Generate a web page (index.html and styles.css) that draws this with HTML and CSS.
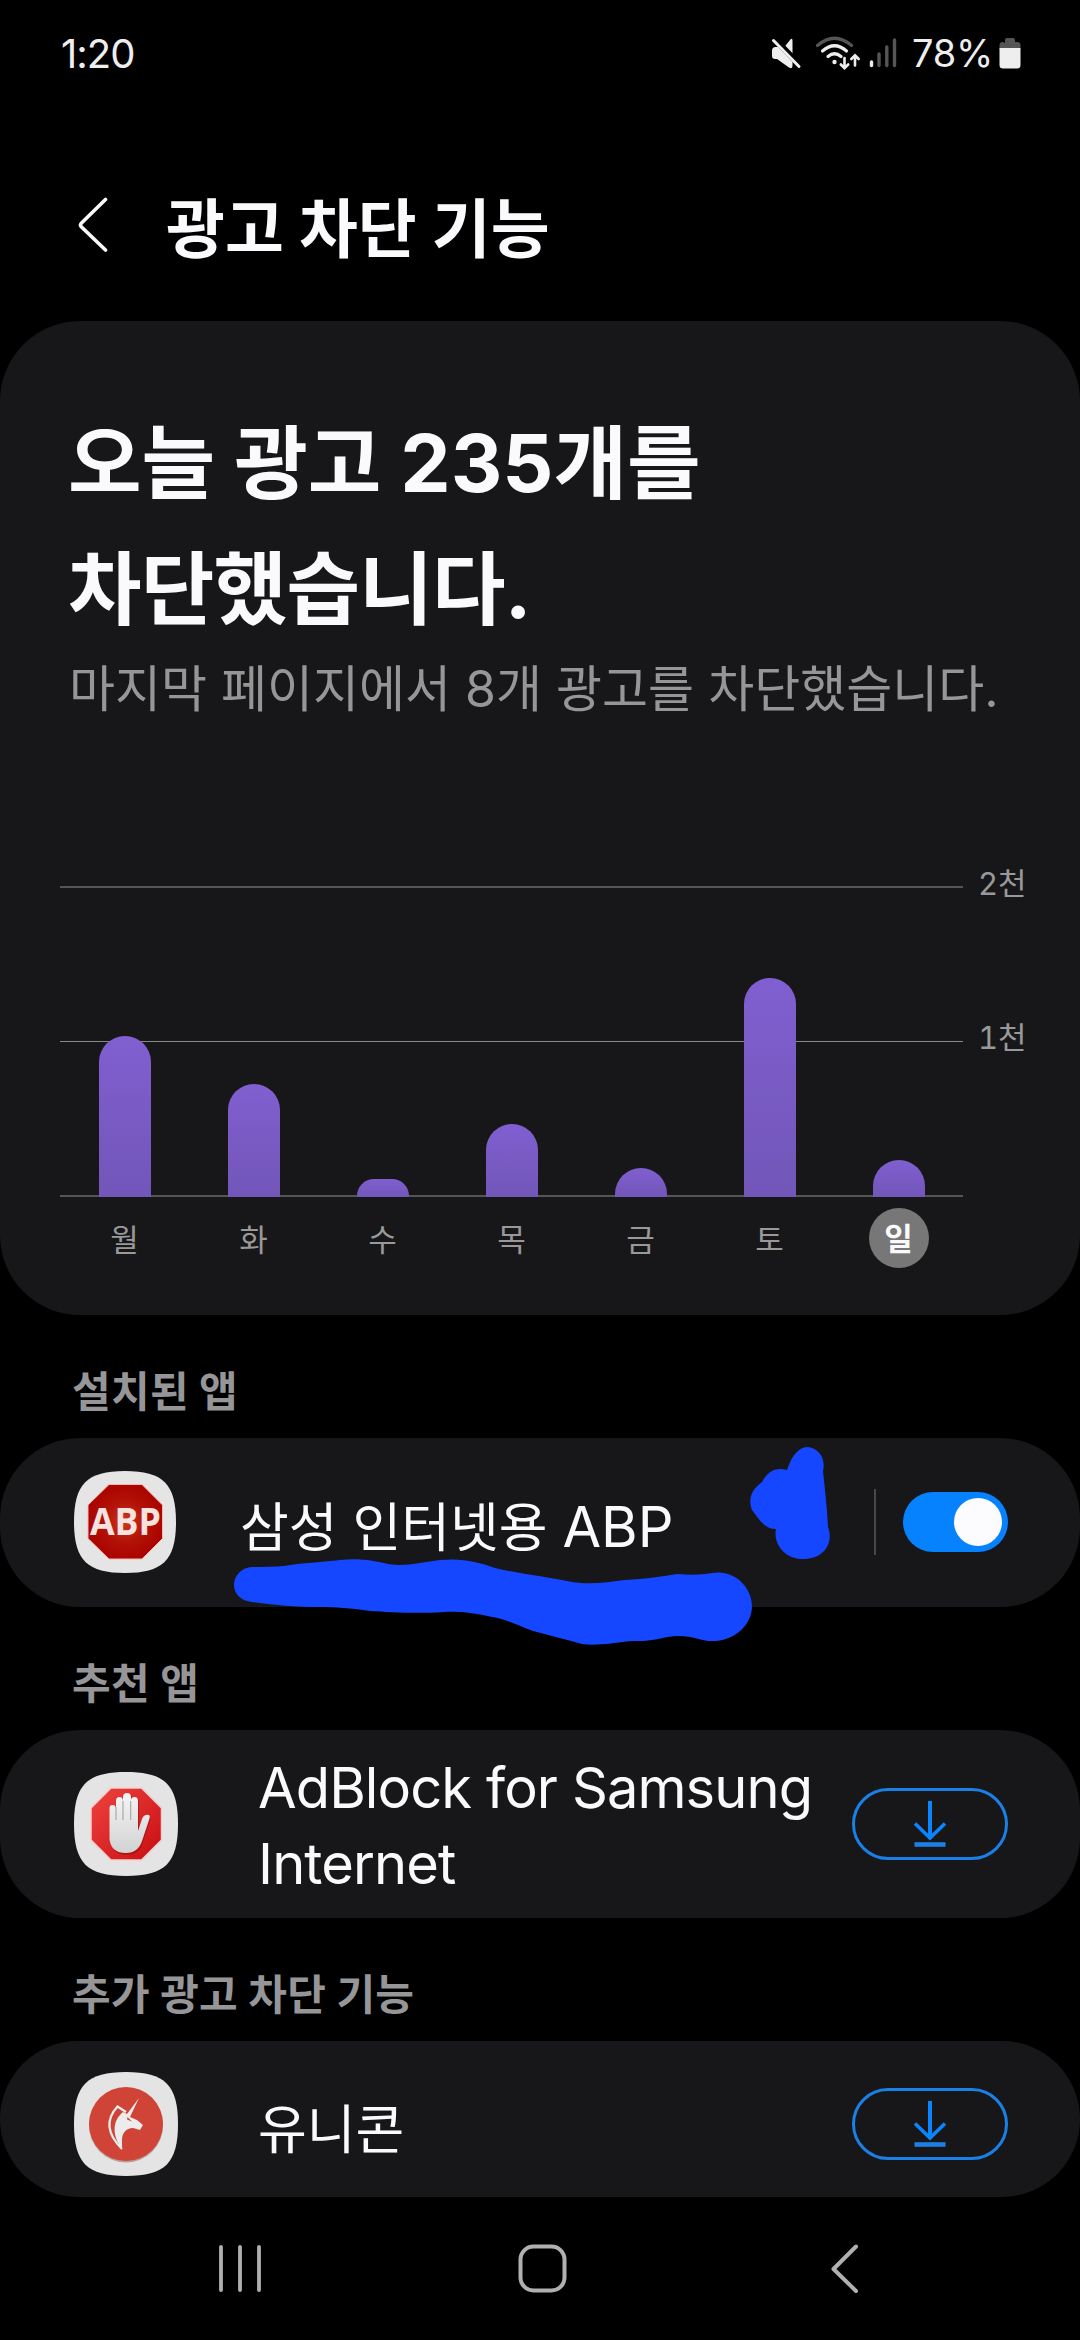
FILE: index.html
```html
<!DOCTYPE html>
<html lang="ko">
<head>
<meta charset="utf-8">
<title>광고 차단 기능</title>
<link rel="stylesheet" href="styles.css">
</head>
<body>
<div class="screen">
  <div class="status">
    <span class="clock">1:20</span>
    <div class="status-right">
      <svg class="ic-mute" width="32" height="32" viewBox="0 0 32 32"><path fill="#eee" d="M4 10 C1.500 10.500 1 12 1 14 V18.500 C1 21.500 2.500 22 6 22 L18 30.500 Q21.500 32.500 21.500 28.500 V25 L7 10 Z M21.500 4 V19 L13 10.500 L19 3 Q21.500 0 21.500 4 Z"/><path d="M5 2 L30 28" stroke="#000" stroke-width="4"/><path d="M2.500 3.500 L28 29.500" stroke="#eee" stroke-width="3" stroke-linecap="round"/></svg>
      <svg class="ic-wifi" width="46" height="36" viewBox="0 0 46 36" fill="none" stroke-linecap="round" stroke-width="3.200"><path d="M2.500 10.500 Q19.500 -4 36.500 10.500" stroke="#555"/><path d="M7.500 16 Q19.500 5.500 31.500 16" stroke="#eee"/><path d="M13 21.500 Q19.500 16 26 21.500" stroke="#eee"/><circle cx="19.500" cy="27" r="2.200" fill="#eee"/><g stroke="#eee" stroke-width="2.600"><path d="M29.500 23 V33 M25.800 29.500 L29.500 33.200 L33.200 29.500"/><path d="M40 30.500 V20.500 M36.300 24 L40 20.300 L43.700 24"/></g></svg>
      <svg class="ic-sig" width="28" height="30" viewBox="0 0 28 30" stroke-width="3.400" stroke-linecap="round"><path d="M2.500 24 V27.500" stroke="#eee"/><path d="M10 16 V27.500 M17.800 9 V27.500 M25.500 2 V27.500" stroke="#555"/></svg>
      <span class="pct">78%</span>
      <svg class="ic-bat" width="22" height="32" viewBox="0 0 22 32"><path d="M6 6 V3 Q6 1 8 1 H14 Q16 1 16 3 V5 H18 Q21.500 5 21.500 8 V12 H0.500 V8 Q0.500 5 4 5 Z" fill="#555"/><path d="M.5 11 H21.500 V28 Q21.500 31.500 18 31.500 H4 Q.5 31.500 .5 28 Z" fill="#eee"/></svg>
    </div>
  </div>

  <header class="appbar">
    <svg width="32" height="58" viewBox="0 0 32 58" fill="none" stroke="#fafafa" stroke-width="3.600" stroke-linecap="round" stroke-linejoin="round"><path d="M28.500 3.500 L4.500 27 Q2.500 29 4.500 31 L28.500 54"/></svg>
    <h1>광고 차단 기능</h1>
  </header>

  <section class="card summary">
    <h2><span class="hl-a">오늘 광고 235개를</span><br><span class="hl-b">차단했습니다.</span></h2>
    <p class="sub">마지막 페이지에서 8개 광고를 차단했습니다.</p>
    <div class="chart">
      <div class="plot">
        <div class="grid"><i></i><i class="thin"></i><i></i></div>
        <div class="bars">
          <b style="height:161px"></b><b style="height:113px"></b><b class="low" style="height:18px"></b><b style="height:73px"></b><b style="height:29px"></b><b style="height:219px"></b><b style="height:37px"></b>
        </div>
      </div>
      <div class="axis"><span>2천</span><span>1천</span></div>
      <div class="days"><span>월</span><span>화</span><span>수</span><span>목</span><span>금</span><span>토</span><span><em>일</em></span></div>
    </div>
  </section>

  <h3>설치된 앱</h3>
  <section class="card row row-abp">
    <svg class="icon" width="104" height="104" viewBox="0 0 104 104"><defs><radialGradient id="g1"><stop offset="0" stop-color="#cb3a1c"/><stop offset=".55" stop-color="#b31207"/><stop offset="1" stop-color="#aa0500"/></radialGradient></defs><path d="M52 1 C90 1 103 14 103 52 S90 103 52 103 1 90 1 52 14 1 52 1Z" fill="#e5e5e5"/><path d="M36 14.500 H69 L89.500 35 V68.500 L69 89 H36 L15 68.500 V35Z" fill="url(#g1)" stroke="#f5b8b0" stroke-width="1"/><text x="52.500" y="65" text-anchor="middle" class="abp" textLength="71" lengthAdjust="spacingAndGlyphs">ABP</text></svg>
    <span class="name abp-name">삼성 인터넷용 <span class="latin">ABP</span></span>
    <span class="divider"></span>
    <span class="toggle"><i></i></span>
    <svg class="scribble" width="530" height="210" viewBox="230 1440 530 210" fill="#1447ff"><path d="M251 1567 C262 1567 273 1567 284 1566 C300 1563 325 1562 340 1560 C360 1558 375 1561 388 1564 C405 1567 423 1562 440 1560 C463 1558 478 1562 495 1568 C520 1574 548 1577 572 1582 C590 1585 609 1582 625 1580 C645 1579 665 1576 677 1574 C690 1575 702 1575 712 1573 C735 1569 752 1588 752 1606 C752 1625 735 1640 715 1641 C702 1642 695 1636 678 1636 C665 1636 655 1642 632 1641 C612 1643 597 1646 582 1644 C565 1639 548 1635 533 1631 C515 1624 505 1619 492 1617 C475 1613 461 1611 444 1612 C415 1614 390 1612 370 1611 C350 1608 335 1607 320 1607 C295 1607 275 1605 252 1602 C241 1601 234 1594 234 1585 C234 1575 242 1568 251 1567Z"/><path d="M787 1470 C792 1454 800 1447 808 1447 C819 1448 826 1459 823 1471 C825 1490 827 1507 828 1527 C834 1543 824 1559 803 1559 C784 1559 773 1543 776 1529 C764 1529 759 1519 752 1510 C748 1499 751 1490 762 1482 C768 1471 776 1467 787 1470Z"/></svg>
  </section>

  <h3>추천 앱</h3>
  <section class="card row row-adb">
    <svg class="icon" width="106" height="106" viewBox="0 0 106 106"><defs><linearGradient id="g2" x1="0" y1="0" x2="1" y2="1"><stop offset="0" stop-color="#ee4440"/><stop offset="1" stop-color="#c80d10"/></linearGradient><linearGradient id="g3" x1="0" y1="0" x2="0" y2="1"><stop offset="0" stop-color="#f5f5f5"/><stop offset="1" stop-color="#d2d2d2"/></linearGradient></defs><path d="M53 1 C92 1 105 14 105 53 S92 105 53 105 1 92 1 53 14 1 53 1Z" fill="#e4e4e4"/><path d="M38 17 H68.500 L88.500 37 V69 L68.500 89 H38 L18 69 V37Z" fill="url(#g2)" stroke="#f2cfce" stroke-width="1.500"/><path d="M39 62 V38 Q39 35 42 35 T45 38 V49 V31 Q45 27 48.500 27 T52 31 V27 Q52 23 55.500 23 T59 27 V30 Q59 27 62.500 27 T66 31 V61 L71 49 Q73 44 77 46 Q78 47 77 50 L70 71 Q67 84 54 84 Q39 84 38 70Z" fill="#901010" opacity=".55"/><path d="M36.500 60 V37 Q36.500 34 39.500 34 T43 37 V49 V30 Q43 26 46.500 26 T50 30 V26 Q50 22 54 22 T58 26 V29 Q58 26 61.500 26 T65 30 V60 L69 48 Q71 43 76 44 Q77.500 45 76 49 L69 70 Q65 82 53 82 Q38 82 36.500 68Z" fill="url(#g3)"/><path d="M43 36 V49 M50 30 V49 M57.700 30 V49" stroke="#aaa" stroke-width="1.200"/></svg>
    <span class="name adb-name">AdBlock for Samsung<br>Internet</span>
    <span class="dl"><svg width="34" height="48" viewBox="0 0 34 48" fill="none" stroke="#0a84ff" stroke-width="4"><path d="M17 1 V39"/><path d="M2 23.500 L17 38 L32 23.500" stroke-width="3.600"/><path d="M1.500 44.500 H32.500" stroke-width="4.600" stroke="#1c80e6"/></svg></span>
  </section>

  <h3>추가 광고 차단 기능</h3>
  <section class="card row row-uni">
    <svg class="icon" width="106" height="106" viewBox="0 0 106 106"><path d="M53 1 C92 1 105 14 105 53 S92 105 53 105 1 92 1 53 14 1 53 1Z" fill="#e4e4e4"/><circle cx="53" cy="54.500" r="37" fill="#b9a09c"/><circle cx="53" cy="53" r="37" fill="#cf4436"/><path d="M66 27 L57 46 L64 49 L70 54 L67 59 L60 57 C53 57 49 62 49 69 V78 C40 66 38 51 50 41 L54 43Z" fill="#ececec"/><path d="M49 78 C33 62 33 48 44.500 35.500 L53 41" fill="none" stroke="#ececec" stroke-width="2.200"/><path d="M54.500 46 L59 50.500 L54 48.500Z" fill="#cf4436"/></svg>
    <span class="name uni-name">유니콘</span>
    <span class="dl"><svg width="34" height="48" viewBox="0 0 34 48" fill="none" stroke="#0a84ff" stroke-width="4"><path d="M17 1 V39"/><path d="M2 23.500 L17 38 L32 23.500" stroke-width="3.600"/><path d="M1.500 44.500 H32.500" stroke-width="4.600" stroke="#1c80e6"/></svg></span>
  </section>

  <nav class="nav" aria-label="탐색">
    <svg width="44" height="50" viewBox="0 0 44 50" stroke="#b0b0b0" stroke-width="3.800" stroke-linecap="round"><path d="M3 3 V46 M22 3 V46 M41 3 V46"/></svg>
    <svg width="50" height="50" viewBox="0 0 50 50" fill="none" stroke="#b0b0b0" stroke-width="4"><rect x="3.500" y="2.500" width="44" height="44" rx="13"/></svg>
    <svg width="30" height="50" viewBox="0 0 30 50" fill="none" stroke="#b0b0b0" stroke-width="4" stroke-linecap="round" stroke-linejoin="round"><path d="M26 2.500 L3.500 25 L26 47"/></svg>
  </nav>
</div>
</body>
</html>
```
FILE: styles.css
```css
* { box-sizing: border-box; margin: 0; padding: 0; }
html, body { background: #000; }
body { font-family: "Inter", "Noto Sans CJK KR", sans-serif; color: #fafafc; }
svg { display: block; flex: none; }
.screen { width: 1080px; height: 2340px; overflow: hidden; display: flex; flex-direction: column; white-space: nowrap; }

.status { height: 106px; display: flex; justify-content: space-between; align-items: center; padding: 0 59px 0 61px; font-size: 38px; color: #eee; }
.clock { font-size: 40px; letter-spacing: -1px; }
.status-right { display: flex; align-items: center; }
.ic-wifi { margin-left: 12px; }
.ic-sig { margin-left: 8px; }
.pct { margin-left: 15px; width: 81px; margin-right: 6px; letter-spacing: -.2px; }

.appbar { height: 215px; display: flex; align-items: center; padding: 33px 0 12px 77px; }
.appbar svg { margin-top: 2px; }
h1 { margin: 10px 0 0 57px; font-size: 64px; font-weight: 700; line-height: 80px; }

.card { background: #17171a; border-radius: 80px; flex: none; }
.summary { height: 994px; padding: 79px 0 0 70px; }
h2 { font-size: 80px; line-height: 126px; font-weight: 700; margin-left: -2px; }
.hl-b { letter-spacing: -.8px; }
.sub { font-size: 50px; line-height: 70px; margin: 2px 0 0 -1px; color: #969696; }

.chart { display: grid; grid-template-columns: 903px 1fr; grid-template-rows: 311px 84px; margin: 162px 0 0 -10px; }
.plot { display: grid; }
.grid, .bars { grid-area: 1 / 1; display: flex; }
.grid { flex-direction: column; justify-content: space-between; }
.grid i { height: 2px; background: #555556; }
.grid .thin { height: 1px; background: #888; }
.bars { align-items: flex-end; justify-content: space-around; }
.bars b { width: 52px; border-radius: 26px 26px 0 0; background: linear-gradient(#805fd0, #7256b8); }
.bars .low { border-radius: 17px 17px 0 0; }
.axis { display: flex; flex-direction: column; gap: 114px; margin-top: -22px; padding-left: 15px; font-size: 31px; font-variant-numeric: tabular-nums; line-height: 40px; color: #999; }
.days { display: grid; grid-template-columns: repeat(7, 1fr); padding-top: 11px; font-size: 31px; line-height: 64px; color: #999; text-align: center; }
.days em { display: block; width: 60px; height: 60px; margin: 0 auto; border-radius: 50%; background: #777; color: #fafafa; font-style: normal; font-weight: 700; line-height: 62px; }

h3 { font-size: 42px; font-weight: 700; letter-spacing: .3px; line-height: 60px; color: #969698; padding-left: 72px; margin-top: 47px; margin-bottom: 16px; }
.row { display: flex; align-items: center; padding: 0 72px 0 73px; position: relative; }
.row-abp { height: 169px; padding-bottom: 2px; }
.row-adb { height: 188px; }
.row-uni { height: 156px; padding-top: 9px; }
.name { font-size: 53px; line-height: 76px; }
.abp-name { margin: 12px 0 0 63px; width: 634px; }
.latin { font-size: 56px; }
.adb-name { margin: 3px 0 0 79px; font-size: 56px; letter-spacing: -.9px; }
.uni-name { margin: 12px 0 0 79px; }
.abp { font: 700 37px "Open Sans", sans-serif; fill: #f6e3e0; }
.divider { width: 2px; height: 66px; background: #48484a; }
.toggle { margin-left: 27px; width: 105px; height: 60px; border-radius: 30px; background: #0682ff; display: flex; justify-content: flex-end; align-items: center; padding-right: 6px; }
.toggle i { width: 48px; height: 48px; border-radius: 50%; background: #fcfcff; }
.scribble { position: absolute; left: 230px; top: 2px; overflow: visible; }
.dl { margin-left: auto; width: 156px; height: 72px; border: 3px solid #1a80e6; border-radius: 36px; display: flex; align-items: center; justify-content: center; }

.nav { display: flex; margin-top: 47px; padding-left: 218px; }
.nav svg:nth-child(2) { margin-left: 255px; }
.nav svg:nth-child(3) { margin-left: 263px; }
```
